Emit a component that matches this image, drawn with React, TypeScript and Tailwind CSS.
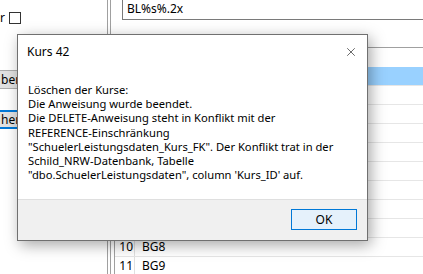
import { X } from "lucide-react";

// rows 1-9 sit behind the dialog, only the last two show their text
const rows = [
  { n: 1, name: "" },
  { n: 2, name: "" },
  { n: 3, name: "" },
  { n: 4, name: "" },
  { n: 5, name: "" },
  { n: 6, name: "" },
  { n: 7, name: "" },
  { n: 8, name: "" },
  { n: 9, name: "" },
  { n: 10, name: "BG8" },
  { n: 11, name: "BG9" },
];

const message = [
  "Löschen der Kurse:",
  "Die Anweisung wurde beendet.",
  "Die DELETE-Anweisung steht in Konflikt mit der",
  "REFERENCE-Einschränkung",
  "\"SchuelerLeistungsdaten_Kurs_FK\". Der Konflikt trat in der",
  "Schild_NRW-Datenbank, Tabelle",
  "\"dbo.SchuelerLeistungsdaten\", column 'Kurs_ID' auf.",
];

export default function App() {
  return (
    <div className="relative h-[274px] w-[423px] overflow-hidden bg-white text-[12px] text-black [font-family:'Noto_Sans',sans-serif]">
      {/* window behind the dialog */}
      <div className="flex h-full">
        <div className="flex w-[107px] flex-col overflow-hidden">
          <div className="mt-[12px] flex h-[12px] items-center">
            <span className="leading-none">r</span>
            <span className="ml-[4px] h-[12px] w-[12px] border border-[#333]" />
          </div>
          <div className="ml-[-60px] mt-[46px] flex h-[19px] w-[110px] items-center border border-[#adadad] bg-[#e1e1e1] pl-[60px] leading-none">
            ber
          </div>
          <div className="ml-[-60px] mt-[21px] flex h-[19px] w-[110px] items-center border-2 border-[#0078d7] bg-[#e1e1e1] pl-[59px] leading-none">
            hen
          </div>
        </div>
        <div className="h-full w-[4px] border-x border-[#a0a0a0]" />
        <div className="flex flex-1 flex-col">
          <div className="ml-[11px] flex h-[20px] items-center border-b border-l border-[#7a7a7a] pl-[4px] pb-[1px]">
            BL%s%.2x
          </div>
          <div className="ml-[3px] mt-[27px] flex flex-col border-l border-t border-[#a0a0a0]">
            <div className="h-[19px]" />
            {rows.map((r) => (
              <div
                key={r.n}
                className={`flex h-[19px] items-center border-b border-[#e6e6e6] ${
                  r.n === 1 ? "bg-[#99d1ff]" : ""
                }`}
              >
                <span className="flex h-full w-[20px] items-center justify-end border-r border-[#e0e0e0] pr-[1px]">
                  {r.name ? r.n : ""}
                </span>
                <span className="pl-[7px]">{r.name}</span>
              </div>
            ))}
          </div>
        </div>
      </div>

      {/* dialog */}
      <div className="absolute left-[17px] top-[34px] flex h-[207px] w-[351px] flex-col border border-[#707070] bg-white shadow-[3px_4px_14px_rgba(0,0,0,0.35)]">
        <div className="flex h-[33px] items-center justify-between pl-[9px] pr-[9px]">
          <span>Kurs 42</span>
          <X className="h-[14px] w-[14px]" strokeWidth={1} />
        </div>
        <div className="flex-1 pl-[10px] pt-[15px] text-[11.2px] leading-[14.2px]">
          {message.map((line) => (
            <div key={line}>{line}</div>
          ))}
        </div>
        <div className="flex h-[41px] justify-end border-t border-[#dfdfdf] bg-[#f0f0f0] pr-[10px] pt-[9px]">
          <button className="flex h-[21px] w-[66px] items-center justify-center border border-[#0078d7] bg-[#e5f1fb] leading-none">
            OK
          </button>
        </div>
      </div>
    </div>
  );
}
